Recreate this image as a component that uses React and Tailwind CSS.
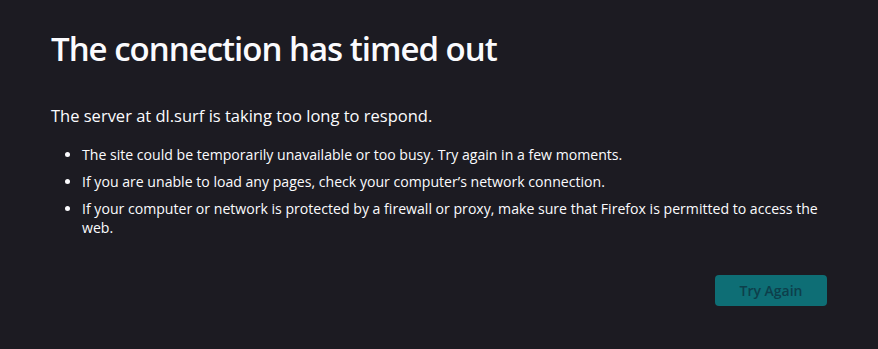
export default function App() {
  const items = [
    "The site could be temporarily unavailable or too busy. Try again in a few moments.",
    "If you are unable to load any pages, check your computer\u2019s network connection.",
    "If your computer or network is protected by a firewall or proxy, make sure that Firefox is permitted to access the web.",
  ];

  return (
    <div
      className="w-[878px] h-[349px] bg-[#1c1b22] text-[#fbfbfe] overflow-hidden"
      style={{ fontFamily: '"Open Sans", "Noto Sans", sans-serif' }}
    >
      <div className="ml-[51px] w-[776px] pt-[25px]">
        <h1 className="text-[33px] leading-[48px] font-semibold tracking-[-1px]">
          The connection has timed out
        </h1>

        <p className="mt-[31px] text-[16.5px] leading-[24px]">
          The server at dl.surf is taking too long to respond.
        </p>

        <ul className="mt-[17px] pl-[31px] list-disc text-[14.1px] leading-[19px] marker:text-[#fbfbfe]">
          {items.map((t) => (
            <li key={t} className="mb-[8px]">
              {t}
            </li>
          ))}
        </ul>

        <div className="flex justify-end mt-[38px]">
          <button className="w-[112px] h-[31px] rounded-[4px] bg-[#0e6e75] text-[#0d3f4b] text-[14px] font-semibold">
            Try Again
          </button>
        </div>
      </div>
    </div>
  );
}
